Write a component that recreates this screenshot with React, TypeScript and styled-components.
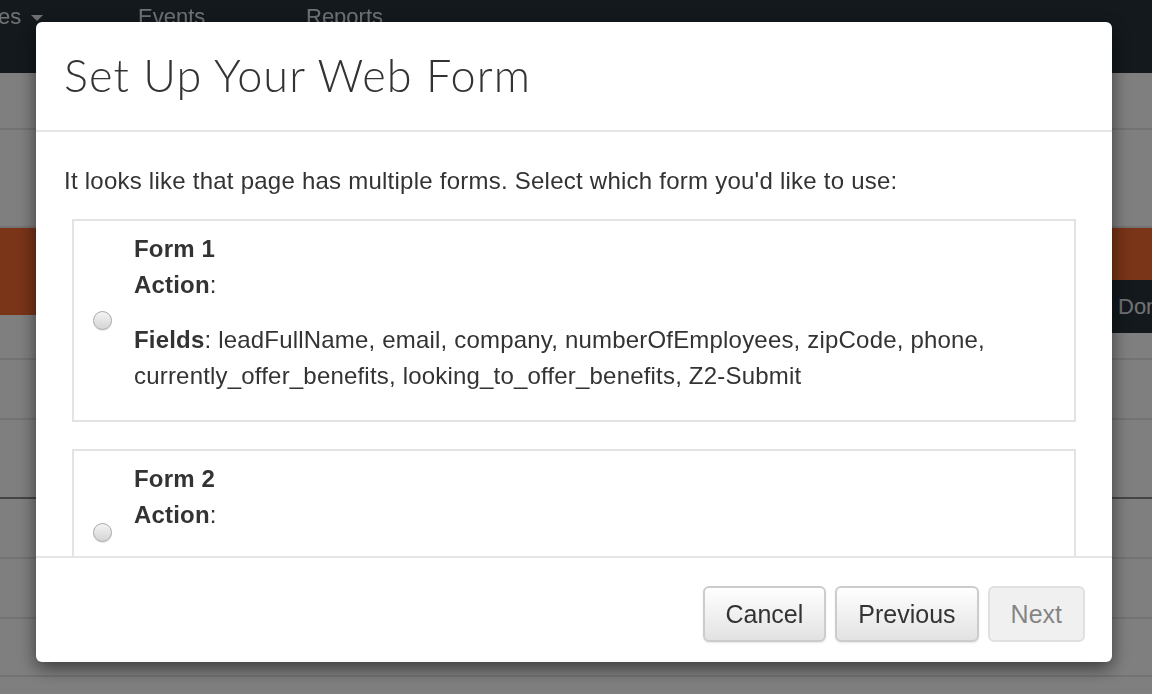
import React, {useState} from 'react';
import styled, {createGlobalStyle} from 'styled-components';

const forms = [
    {
        name: 'Form 1',
        action: '',
        fields: ['leadFullName', 'email', 'company', 'numberOfEmployees', 'zipCode', 'phone',
            'currently_offer_benefits', 'looking_to_offer_benefits', 'Z2-Submit'],
    },
    {
        name: 'Form 2',
        action: '',
        fields: ['email', 'Submit'],
    },
];

function App() {
    const [selected, setSelected] = useState<number | null>(null);

    return (
        <>
            <GlobalStyle/>
            <Page>
                <NavBar>
                    <NavItem $width={140}>es <Caret/></NavItem>
                    <NavItem $width={168}>Events</NavItem>
                    <NavItem $width={168}>Reports</NavItem>
                </NavBar>
                <Row $height={57}/>
                <Row $height={98}/>
                <Banner/>
                <Row $height={45}/>
                <Row $height={60}/>
                <Row $height={79} $dark/>
                <Row $height={60}/>
                <Row $height={60}/>
                <Row $height={58}/>
                <Row $height={60}/>
                <DoneButton>Done</DoneButton>
            </Page>
            <Backdrop/>
            <Modal>
                <Header>
                    <Title>Set Up Your Web Form</Title>
                </Header>
                <Body>
                    <Intro>It looks like that page has multiple forms. Select which form you'd like to use:</Intro>
                    {forms.map((form, index) => (
                        <FormCard key={form.name} onClick={() => setSelected(index)}>
                            <RadioCell>
                                <Radio type="radio" name="form" checked={selected === index}
                                       onChange={() => setSelected(index)}/>
                            </RadioCell>
                            <FormInfo>
                                <Line><b>{form.name}</b></Line>
                                <Line><b>Action</b>: {form.action}</Line>
                                <Fields><b>Fields</b>: {form.fields.join(', ')}</Fields>
                            </FormInfo>
                        </FormCard>
                    ))}
                </Body>
                <Footer>
                    <Button>Cancel</Button>
                    <Button>Previous</Button>
                    <Button disabled={selected === null}>Next</Button>
                </Footer>
            </Modal>
        </>
    );
}

const GlobalStyle = createGlobalStyle`
    html, body {
        margin: 0;
        padding: 0;
        overflow: hidden;
    }
    body {
        font-family: "Liberation Sans", Arial, sans-serif;
        color: #333;
    }
`

const Page = styled.div`
    position: fixed;
    inset: 0;
    background: #fff;
    display: flex;
    flex-direction: column;
`

const NavBar = styled.div`
    height: 73px;
    flex-shrink: 0;
    background: #26323a;
    display: flex;
    align-items: flex-start;
    padding-top: 4px;
    box-sizing: border-box;
    margin-left: -2px;
`

const NavItem = styled.div<{ $width: number }>`
    width: ${p => p.$width}px;
    font-family: "Liberation Sans", Arial, sans-serif;
    font-size: 22px;
    color: #e0e5ea;
    white-space: nowrap;
`

const Caret = styled.span`
    display: inline-block;
    width: 0;
    height: 0;
    border-left: 6px solid transparent;
    border-right: 6px solid transparent;
    border-top: 6px solid #e0e5ea;
    vertical-align: middle;
    margin-left: 4px;
`

const Row = styled.div<{ $height: number; $dark?: boolean }>`
    height: ${p => p.$height}px;
    flex-shrink: 0;
    border-bottom: ${p => p.$dark ? '2px solid #8a8a8a' : '2px solid #e6e6e6'};
    box-sizing: border-box;
`

const Banner = styled.div`
    height: 87px;
    flex-shrink: 0;
    background: #f46830;
`

const DoneButton = styled.div`
    position: absolute;
    top: 280px;
    left: 1112px;
    width: 80px;
    height: 53px;
    background: #26323a;
    color: #e0e5ea;
    font-family: "Liberation Sans", Arial, sans-serif;
    font-size: 22px;
    line-height: 53px;
    padding-left: 6px;
`

const Backdrop = styled.div`
    position: fixed;
    inset: 0;
    background: rgba(0, 0, 0, 0.5);
`

const Modal = styled.div`
    position: fixed;
    top: 22px;
    left: 36px;
    width: 1076px;
    height: 640px;
    background: #fff;
    border-radius: 6px;
    box-shadow: 0 6px 18px rgba(0, 0, 0, 0.55);
    display: flex;
    flex-direction: column;
    overflow: hidden;
`

const Header = styled.div`
    height: 110px;
    flex-shrink: 0;
    box-sizing: border-box;
    border-bottom: 2px solid #e5e5e5;
    padding: 26px 28px 0;
`

const Title = styled.h1`
    margin: 0;
    font-family: Lato, "Open Sans", sans-serif;
    font-weight: 300;
    font-size: 45px;
    line-height: 54px;
    color: #333;
    letter-spacing: 1.1px;
`

const Body = styled.div`
    flex: 1;
    overflow: hidden;
    padding: 34px 36px 0 28px;
`

const Intro = styled.p`
    margin: 0 0 23px;
    font-size: 24px;
    line-height: 30px;
    letter-spacing: 0.24px;
`

const FormCard = styled.label`
    display: flex;
    border: 2px solid #e3e3e3;
    margin: 0 0 27px 8px;
    cursor: pointer;
`

const RadioCell = styled.div`
    width: 56px;
    flex-shrink: 0;
    display: flex;
    align-items: center;
    justify-content: center;
`

const Radio = styled.input`
    appearance: none;
    width: 19px;
    height: 19px;
    margin: 0;
    border-radius: 50%;
    border: 1px solid #a9a9a9;
    background: linear-gradient(#f4f4f4, #d4d4d4);
    box-shadow: 0 1px 1px rgba(0, 0, 0, 0.12);
    cursor: pointer;

    &:checked {
        background: radial-gradient(circle, #fff 0 3px, #3b8ce0 4px);
        border-color: #2a6fc0;
    }
`

const FormInfo = styled.div`
    padding: 10px 36px 26px 4px;
    font-size: 24px;
    line-height: 36px;
    letter-spacing: 0.19px;
    color: #333;
`

const Line = styled.div`
    white-space: nowrap;
`

const Fields = styled.p`
    margin: 19px 0 0;
`

const Footer = styled.div`
    height: 106px;
    flex-shrink: 0;
    box-sizing: border-box;
    border-top: 2px solid #e5e5e5;
    display: flex;
    justify-content: flex-end;
    align-items: flex-start;
    gap: 9px;
    padding: 28px 27px 0;
`

const Button = styled.button`
    height: 56px;
    padding: 0 21px;
    font-family: "Liberation Sans", Arial, sans-serif;
    font-size: 25px;
    color: #333;
    background: linear-gradient(#fff, #e2e2e2);
    border: 2px solid #ccc;
    border-radius: 6px;
    box-shadow: inset 0 1px 0 rgba(255, 255, 255, 0.15), 0 1px 2px rgba(0, 0, 0, 0.1);
    cursor: pointer;

    &:disabled {
        opacity: 0.6;
        cursor: not-allowed;
        background: #e6e6e6;
        box-shadow: none;
    }
`

export default App;
